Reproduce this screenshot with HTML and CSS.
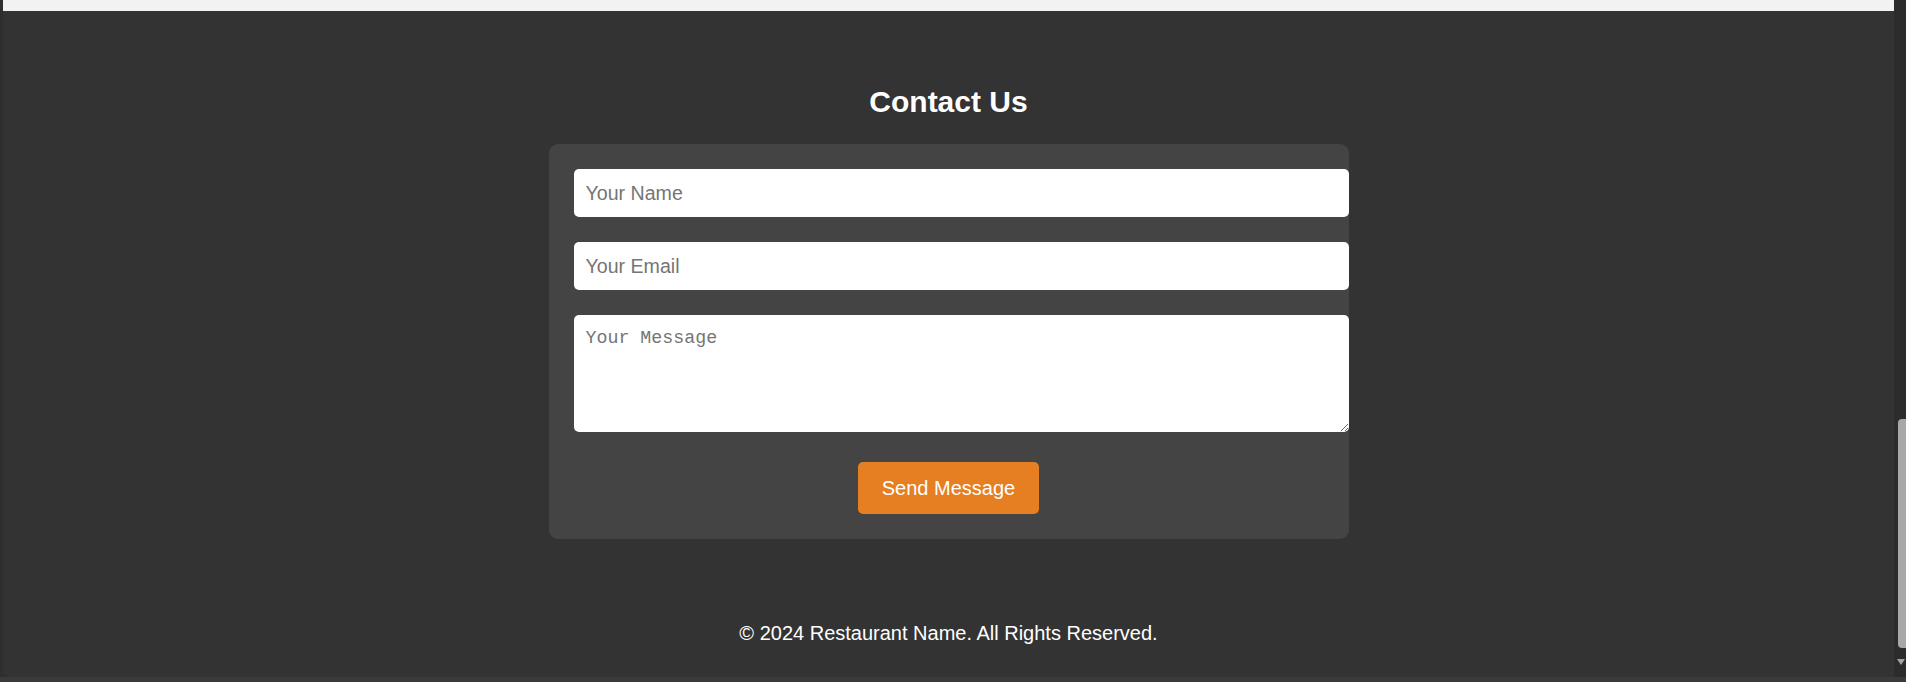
FILE: index.html
```html
<!DOCTYPE html>
<html lang="en">
<head>
<meta charset="utf-8">
<title>Contact Us</title>
<link rel="stylesheet" href="styles.css">
</head>
<body>
<div class="window">
  <div class="frame-edge"></div>
  <div class="viewport">
    <div class="prev-section"></div>
    <section class="contact">
      <h2 class="contact-title">Contact Us</h2>
      <form class="contact-card">
        <input class="field" type="text" placeholder="Your Name">
        <input class="field" type="email" placeholder="Your Email">
        <textarea class="field field-message" placeholder="Your Message"></textarea>
        <div class="actions">
          <button class="send-btn" type="button">Send Message</button>
        </div>
      </form>
    </section>
    <footer class="site-footer">
      <p class="copyright">© 2024 Restaurant Name. All Rights Reserved.</p>
    </footer>
  </div>
  <div class="scrollbar">
    <div class="scroll-thumb"></div>
    <div class="scroll-arrow"></div>
  </div>
</div>
<div class="window-bottom"></div>
</body>
</html>
```

FILE: styles.css
```css
html, body {
  margin: 0;
  padding: 0;
}

body {
  background: #3a3a3a;
  font-family: "Liberation Sans", Arial, sans-serif;
  overflow: hidden;
  height: 682px;
}

.window {
  display: flex;
  height: 677px;
  background: #2e2e2e;
}

.frame-edge {
  width: 3px;
  flex: none;
  background: #2e2e2e;
}

.viewport {
  flex: 1;
  display: flex;
  flex-direction: column;
  background: #333333;
  border-bottom-left-radius: 7px;
  overflow: hidden;
}

.prev-section {
  height: 11px;
  flex: none;
  background: #f2f2f2;
}

.contact {
  padding: 74px 0 50px;
}

.contact-title {
  margin: 0 0 25px;
  text-align: center;
  color: #ffffff;
  font-size: 30px;
  font-weight: bold;
  line-height: 34px;
}

.contact-card {
  box-sizing: border-box;
  width: 800px;
  margin: 0 auto;
  padding: 25px;
  background: #444444;
  border-radius: 9px;
  display: flex;
  flex-direction: column;
}

.field {
  box-sizing: border-box;
  width: calc(100% + 25px);
  height: 48px;
  margin: 0 0 25px;
  padding: 0 12px;
  border: none;
  border-radius: 5px;
  background: #ffffff;
  font-family: "Liberation Sans", Arial, sans-serif;
  font-size: 19.6px;
  color: #222;
  outline: none;
}

.field::placeholder {
  color: #757575;
}

.field-message {
  height: 117px;
  margin-bottom: 30px;
  padding: 12px 12px;
  font-family: "Liberation Mono", "DejaVu Sans Mono", monospace;
  font-size: 18.3px;
  line-height: 22px;
  resize: vertical;
}

.actions {
  display: flex;
  justify-content: center;
}

.send-btn {
  height: 52px;
  padding: 0 24px;
  border: none;
  border-radius: 5px;
  background: #e67e22;
  color: #ffffff;
  font-family: "Liberation Sans", Arial, sans-serif;
  font-size: 20px;
  cursor: pointer;
}

.site-footer {
  padding: 33px 0 32px;
  text-align: center;
}

.copyright {
  margin: 0;
  color: #ffffff;
  font-size: 20px;
  line-height: 23px;
}

.scrollbar {
  width: 12px;
  flex: none;
  background: #2c2c2c;
  display: flex;
  flex-direction: column;
  align-items: flex-end;
  padding-top: 419px;
  box-sizing: border-box;
}

.scroll-thumb {
  width: 8px;
  height: 229px;
  background: #a8a8a8;
  border-radius: 4px 0 0 4px;
}

.scroll-arrow {
  margin-top: 11px;
  width: 0;
  height: 0;
  border-left: 4px solid transparent;
  border-right: 4px solid transparent;
  border-top: 6px solid #a3a3a3;
  margin-right: 1px;
}

.window-bottom {
  height: 5px;
  background: #3a3a3a;
}
```
